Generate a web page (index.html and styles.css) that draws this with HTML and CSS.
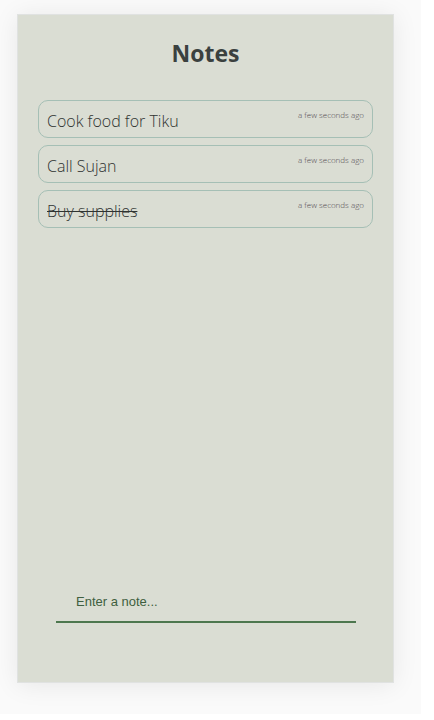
FILE: index.html
```html
<!DOCTYPE html>
<html lang="en">
<head>
<meta charset="utf-8">
<meta name="viewport" content="width=device-width, initial-scale=1">
<title>Notes</title>
<link rel="stylesheet" href="styles.css">
</head>
<body>
<div class="page">
  <main class="card">
    <h1 class="title">Notes</h1>
    <ul class="notes">
      <li class="note"><span class="note-text">Cook food for Tiku</span><time class="note-time">a few seconds ago</time></li>
      <li class="note"><span class="note-text">Call Sujan</span><time class="note-time">a few seconds ago</time></li>
      <li class="note"><s class="note-text">Buy supplies</s><time class="note-time">a few seconds ago</time></li>
    </ul>
    <form class="entry">
      <input class="entry-input" type="text" placeholder="Enter a note..." aria-label="Enter a note">
    </form>
  </main>
</div>
</body>
</html>
```
FILE: styles.css
```css
* {
  box-sizing: border-box;
}

body {
  display: flex;
  min-height: 100vh;
  margin: 0;
  padding: 0 13px 6px 0;
  background: #fff;
  color: #3b413f;
  font-family: "Segoe UI", "Open Sans", "Noto Sans", sans-serif;
}

.page {
  display: flex;
  flex: 1;
  padding: 14px 27px 31px 17px;
  background: #fafafa;
  overflow: hidden;
}

.card {
  display: flex;
  flex: 1;
  flex-direction: column;
  padding: 20px;
  background: #daddd3;
  border: 1px solid #e0e2e1;
  box-shadow: 0 2px 24px rgba(0, 0, 0, 0.08);
}

.title {
  margin: 0 0 29px;
  font-size: 23px;
  line-height: 36px;
  text-align: center;
}

.notes {
  display: flex;
  flex: 1;
  flex-direction: column;
  gap: 7px;
  margin: 0;
  padding: 0;
  list-style: none;
}

.note {
  display: flex;
  justify-content: space-between;
  padding: 8px 8px 4px;
  border: 1px solid #a5bfb5;
  border-radius: 10px;
}

.note-text {
  color: #2f3331;
  font-size: 16px;
  font-weight: 350;
  line-height: 24px;
}

.note-time {
  color: #504850;
  font-size: 8px;
  font-weight: 350;
  line-height: 12px;
}

.entry {
  margin: 0 17px 39px 18px;
}

.entry-input {
  display: block;
  width: 100%;
  padding: 13px 20px 11px;
  background: transparent;
  border: 0;
  border-bottom: 2px solid #4d774e;
  color: #3f5f40;
  font-family: "Liberation Sans", Arial, sans-serif;
  font-size: 13px;
  line-height: 16px;
  outline: none;
}

.entry-input::placeholder {
  color: #3f5f40;
  opacity: 1;
}
```
